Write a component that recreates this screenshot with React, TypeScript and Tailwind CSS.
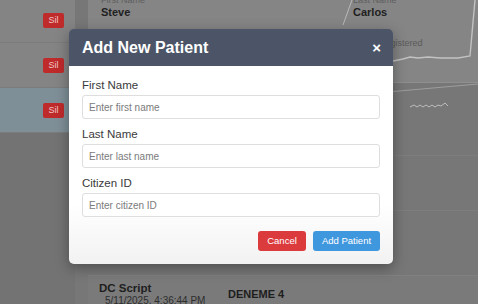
import type { ReactNode } from "react";

const FONT = "font-['Liberation_Sans',Arial,sans-serif]";

function SidebarRow({ active, children }: { active?: boolean; children?: ReactNode }) {
  return (
    <div
      className={
        "h-[45px] shrink-0 flex items-center justify-end pr-[11px] border-b border-[#7c7c7c] " +
        (active ? "bg-[#7f8f98]" : "bg-[#848484]")
      }
    >
      {children}
    </div>
  );
}

function SilButton() {
  return (
    <span className="w-[21px] h-[15px] rounded-[2px] bg-[#bf2a2b] text-[#f1c9c9] text-[9px] leading-[15px] text-center">
      Sil
    </span>
  );
}

function Field({ label, placeholder }: { label: string; placeholder: string }) {
  return (
    <div className="flex flex-col">
      <label className="text-[11.5px] leading-[13px] text-[#3a3a3a] mb-[3px]">{label}</label>
      <input
        className="h-[24px] w-full rounded-[3px] border border-[#dedede] bg-white px-[6px] text-[10px] text-[#333] placeholder:text-[#7b7b7b] outline-none"
        placeholder={placeholder}
      />
    </div>
  );
}

// Blurred page behind the dialog, already dimmed by the overlay.
function Background() {
  return (
    <div className="absolute inset-0 flex bg-[#767676]">
      <div className="w-[75px] flex flex-col">
        <div className="-mt-[2px]">
          <SidebarRow>
            <SilButton />
          </SidebarRow>
          <SidebarRow>
            <SilButton />
          </SidebarRow>
          <SidebarRow active>
            <SilButton />
          </SidebarRow>
        </div>
        <div className="flex-1 bg-[#737373]" />
      </div>

      <div className="flex-1 flex flex-col pl-[13px] bg-[#777777]">
        <div className="relative shrink-0 h-[83px] bg-[#858585] border-b border-[#8f8f8f]">
          <div className="flex -mt-[5px] pl-[13px]">
            <div className="w-[252px]">
              <div className="text-[9px] leading-[11px] text-[#5e5e5e]">First Name</div>
              <div className="text-[11px] leading-[13px] font-bold text-[#1f1f1f]">Steve</div>
            </div>
            <div>
              <div className="text-[9px] leading-[11px] text-[#5e5e5e]">Last Name</div>
              <div className="text-[11px] leading-[13px] font-bold text-[#1f1f1f]">Carlos</div>
            </div>
          </div>
          <div className="absolute left-[291px] top-[37px] text-[9px] text-[#5a5a5a]">Registered</div>
          <svg className="absolute inset-0" width="390" height="83" viewBox="0 0 390 83">
            <path d="M255 25 L264 0" stroke="#b9b9b9" strokeWidth="1" fill="none" />
            <path
              d="M300 62 L315 59 L322 57 L330 58 L340 57 L352 58 L370 58 L382 56 L387 0"
              stroke="#c2c2c2"
              strokeWidth="1.4"
              fill="none"
            />
          </svg>
        </div>

        <div className="relative shrink-0 h-[73px] border-b border-[#7d7d7d]">
          <svg className="absolute inset-0" width="390" height="73" viewBox="0 0 390 73">
            <path d="M300 9 L390 1" stroke="#9d9d9d" strokeWidth="1" fill="none" />
            <path
              d="M322 24 L326 22 L329 24 L332 22 L335 24 L338 22 L341 24 L344 22 L347 24 L350 22 L353 23 L357 20 L360 23"
              stroke="#bdbdbd"
              strokeWidth="1"
              fill="none"
            />
          </svg>
        </div>
        <div className="shrink-0 h-[55px] border-b border-[#7d7d7d]" />
        <div className="shrink-0 h-[64px]" />

        <div className="flex-1 bg-[#7a7a7a] border-t border-[#808080] pl-[11px] pt-[6px] flex">
          <div className="w-[129px]">
            <div className="text-[11.5px] leading-[13px] font-bold text-[#1e1e1e]">DC Script</div>
            <div className="text-[10px] leading-[12px] text-[#2e2e2e] pl-[6px]">5/11/2025, 4:36:44 PM</div>
          </div>
          <div className="pt-[6px] text-[11px] leading-[13px] font-bold text-[#1e1e1e]">DENEME 4</div>
        </div>
      </div>
    </div>
  );
}

export default function App() {
  return (
    <div className={"relative w-[478px] h-[304px] overflow-hidden " + FONT}>
      <Background />

      <svg className="absolute left-[74px] top-[121px]" width="10" height="14" viewBox="0 0 10 14">
        <path d="M0.5 0.5 L0.5 11 L3 8.5 L5 13 L6.5 12.3 L4.6 8 L8 8 Z" fill="none" stroke="#2a2a2a" strokeWidth="0.9" />
      </svg>

      <div className="absolute left-[69px] top-[29px] w-[324px] rounded-[5px] overflow-hidden shadow-[0_4px_14px_rgba(0,0,0,0.35)]">
        <div className="h-[37px] bg-[#4b5567] flex items-center justify-between px-[13px]">
          <h2 className="text-[16px] font-bold text-white">Add New Patient</h2>
          <button className="text-[15px] font-bold text-white leading-none -mr-[1px]">×</button>
        </div>
        <div className="bg-gradient-to-b from-white from-70% to-[#f2f2f2] px-[13px] pt-[13px] pb-[13px] flex flex-col gap-[9px]">
          <Field label="First Name" placeholder="Enter first name" />
          <Field label="Last Name" placeholder="Enter last name" />
          <Field label="Citizen ID" placeholder="Enter citizen ID" />
          <div className="flex justify-end gap-[7px] mt-[5px]">
            <button className="h-[20px] w-[48px] rounded-[3px] bg-[#dc3b3e] text-white text-[9.5px]">Cancel</button>
            <button className="h-[20px] w-[67px] rounded-[3px] bg-[#3f97de] text-white text-[9.5px]">Add Patient</button>
          </div>
        </div>
      </div>
    </div>
  );
}
